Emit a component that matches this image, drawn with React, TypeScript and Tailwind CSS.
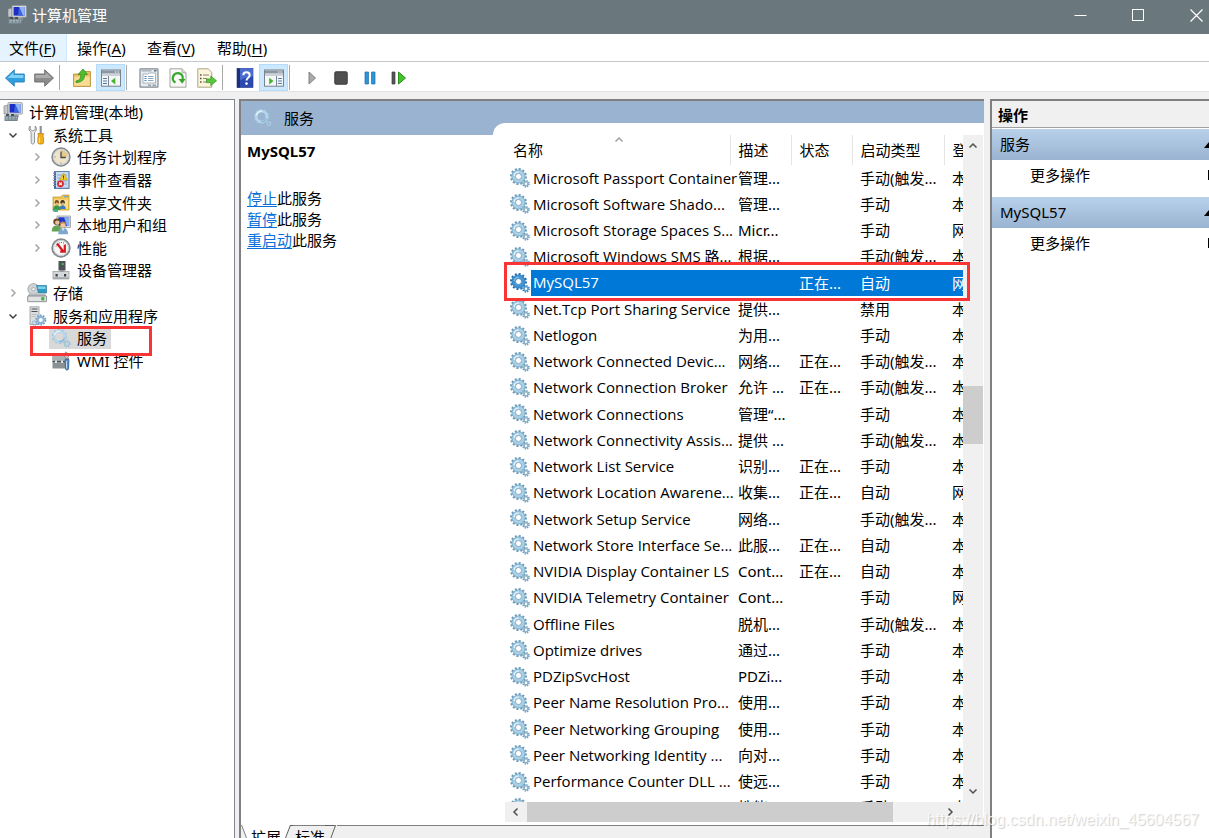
import type { ReactNode } from "react";
import clsx from "clsx";

type IconProps = { className?: string };

/* ---------- Iconos ---------- */

function GearsIcon({ className, active }: IconProps & { active?: boolean }) {
  const edge = active ? "#2672b2" : "#6c9cba";
  const body = active ? "#3f95d6" : "#a9d0e6";
  const small = active ? "#5d9fd0" : "#8bb2ca";
  return (
    <svg viewBox="0 0 20 20" className={clsx("w-5 h-5 shrink-0", className)} fill="none">
      <circle cx="8.5" cy="8.5" r="7.4" stroke={edge} strokeWidth="2.2" strokeDasharray="2 1.87" />
      <circle cx="8.5" cy="8.5" r="5" stroke={body} strokeWidth="3.6" />
      <circle cx="8.5" cy="8.5" r="6.6" stroke={edge} strokeWidth="0.7" />
      <path d="M4.2 8A4.4 4.4 0 0 1 9 4.1" stroke="#e3f3fb" strokeWidth="1.4" opacity={active ? 0.4 : 1} />
      <circle cx="8.5" cy="8.5" r="3.1" fill="#fff" stroke={edge} strokeWidth="0.9" />
      <circle cx="16" cy="15.8" r="3" stroke={edge} strokeWidth="1.8" strokeDasharray="1.2 1.15" />
      <circle cx="16" cy="15.8" r="2" stroke={small} strokeWidth="1.6" />
      <circle cx="16" cy="15.8" r="0.9" fill="#eef6fa" />
    </svg>
  );
}

function PaleGearsIcon({ className }: IconProps) {
  return (
    <svg viewBox="0 0 20 20" className={clsx("w-5 h-5 shrink-0", className)} fill="none">
      <circle cx="8.5" cy="8.5" r="6.9" stroke="#a3c6dc" strokeWidth="1.6" strokeDasharray="2.6 1.74" />
      <circle cx="8.5" cy="8.5" r="5.3" stroke="#b4d6ea" strokeWidth="2.8" />
      <path d="M3.4 7.5A5.2 5.2 0 0 1 9 3.3" stroke="#e2f2fb" strokeWidth="1.5" />
      <path d="M13.4 10A5.2 5.2 0 0 1 8 13.7" stroke="#8ab3d0" strokeWidth="1.2" />
      <circle cx="16" cy="15.8" r="2.8" stroke="#92b5cd" strokeWidth="1.6" strokeDasharray="1.2 1" />
      <circle cx="16" cy="15.8" r="1.8" stroke="#accadd" strokeWidth="1.3" />
    </svg>
  );
}

function ComputerIcon({ className }: IconProps) {
  return (
    <svg viewBox="0 0 20 20" className={clsx("w-5 h-5 shrink-0", className)}>
      <path d="M1 4l4-1v9H1z" fill="#c4c8cb" stroke="#74797e" strokeWidth="0.6" />
      <rect x="5" y="0.6" width="14.4" height="11.6" rx="0.8" fill="#d8dbde" stroke="#8b9095" strokeWidth="0.7" />
      <rect x="6.6" y="2" width="11.2" height="8.6" fill="#1b2fc4" />
      <path d="M12 2h5.8v8.6h-2z" fill="#8eb4f4" />
      <path d="M12 2l3.8 8.6H11z" fill="#3f63e0" />
      <path d="M10 12.2h5l1 2.6H9z" fill="#a6abaf" />
      <path d="M1.5 13.5h14l-1 5.5H1.5z" fill="#74858f" />
      <path d="M3 12h3v2H3zM8 12h3v2H8z" fill="#47535a" />
      <path d="M2.5 15.3h11.6M2.5 17h11.2" stroke="#c9d1d5" strokeWidth="0.8" strokeDasharray="2.4 1" />
    </svg>
  );
}

function ToolsIcon() {
  return (
    <svg viewBox="0 0 20 20" className="w-5 h-5 shrink-0">
      <path
        d="M3.2 1C1.6 2.2 1.5 5 3 6.3l1.1 1V17c0 1.3.6 2 1.7 2s1.7-.7 1.7-2V7.3l1.1-1C10 5 9.8 2.2 8.2 1v3.6L5.8 5.7 3.2 4.5z"
        fill="#e4e6e8"
        stroke="#7c8186"
        strokeWidth="0.8"
      />
      <path d="M12.6 1h2.2v7.5h-2.2z" fill="#8c9196" />
      <path d="M10.8 8.6h5.8l-.8 2.4.8 1.2v5.3c0 1-.8 1.6-2.9 1.6s-2.9-.6-2.9-1.6v-5.3l.8-1.2z" fill="#f2ae1c" stroke="#b8790c" strokeWidth="0.7" />
      <path d="M12.4 12.5v5.2" stroke="#fbe08a" strokeWidth="1.2" />
    </svg>
  );
}

function ClockIcon() {
  return (
    <svg viewBox="0 0 20 20" className="w-5 h-5 shrink-0">
      <circle cx="10" cy="10" r="8.8" fill="#efe4c8" stroke="#84888c" strokeWidth="1.8" />
      <circle cx="10" cy="10" r="7.6" fill="none" stroke="#cfd3d6" strokeWidth="1.2" />
      <path d="M10 10V3a7 7 0 0 1 7 7z" fill="#e8c98a" />
      <path d="M10 4.5V10.5h4.8" fill="none" stroke="#3f4a52" strokeWidth="1.3" />
      <path d="M10 15.5v1.2M3.4 10h1.2" stroke="#7c7c7c" strokeWidth="0.9" />
    </svg>
  );
}

function EventViewerIcon() {
  return (
    <svg viewBox="0 0 20 20" className="w-5 h-5 shrink-0">
      <rect x="3" y="1.2" width="15.5" height="17.6" fill="#3e5f9f" />
      <rect x="5" y="2" width="12.6" height="15.8" fill="#c8dcf2" />
      <path d="M6 5h10M6 8h10M6 11h10M6 14h10" stroke="#7f9cc8" strokeWidth="0.8" />
      <path d="M2 3h3M2 5.5h3M2 8h3M2 10.5h3M2 13h3M2 15.5h3" stroke="#8a9098" strokeWidth="1.1" />
      <path d="M12.5 3l4 7h-8z" fill="#f6d02a" stroke="#b99a12" strokeWidth="0.6" />
      <path d="M12.5 5.5v2.3M12.5 8.5v.8" stroke="#3a3208" strokeWidth="1" />
      <circle cx="9.5" cy="13.8" r="3.4" fill="#d8262c" />
      <path d="M8.2 12.5l2.6 2.6M10.8 12.5l-2.6 2.6" stroke="#fff" strokeWidth="1.1" />
    </svg>
  );
}

function SharedFoldersIcon() {
  return (
    <svg viewBox="0 0 20 20" className="w-5 h-5 shrink-0">
      <path d="M2 4h8l1.5-2H18v15H2z" fill="#f0c452" stroke="#c2932c" strokeWidth="0.7" />
      <path d="M3 6.5h14V16H3z" fill="#fadf8f" />
      <path d="M13 2.8h4v1.4h-4z" fill="#6aa6d8" />
      <circle cx="5.8" cy="9.2" r="2.2" fill="#7b4e22" />
      <path d="M4.6 9.6h2.6v2H4.6z" fill="#e8b98c" />
      <path d="M2 17c0-3 1.5-4.8 3.8-4.8S9.6 14 9.6 17z" fill="#3f9a48" />
      <circle cx="11.6" cy="9.2" r="2.2" fill="#3c3024" />
      <path d="M10.5 9.6h2.4v2h-2.4z" fill="#e8b98c" />
      <path d="M8.6 16c0-2.6 1.2-3.8 3-3.8s3.2 1.2 3.2 3.8z" fill="#3a7dbb" />
      <path d="M1 16.5h6v2.5H3z" fill="#4eb08a" />
    </svg>
  );
}

function UsersIcon() {
  return (
    <svg viewBox="0 0 20 20" className="w-5 h-5 shrink-0">
      <rect x="6" y="1" width="13.5" height="11.5" fill="#d9dcdf" stroke="#8e9398" strokeWidth="0.7" />
      <rect x="7.4" y="2.3" width="10.7" height="8.6" fill="#1e36c8" />
      <path d="M13 2.3h5.1v8.6h-2z" fill="#86aef2" />
      <circle cx="5.6" cy="6.8" r="3.3" fill="#6d4a2a" />
      <circle cx="6.3" cy="7.6" r="2.2" fill="#ebc19a" />
      <path d="M.8 16.5c0-4 1.6-6 4.9-6s4.6 2 4.6 6z" fill="#63a352" />
      <circle cx="12" cy="9.5" r="3.1" fill="#b98848" />
      <circle cx="12" cy="10.4" r="2.2" fill="#f0cba6" />
      <path d="M7.3 19.3c0-4 1.5-6.2 4.7-6.2s5 2.2 5 6.2z" fill="#7da7cf" />
      <path d="M11 13.3l1 3 1-3z" fill="#fff" />
    </svg>
  );
}

function PerformanceIcon() {
  return (
    <svg viewBox="0 0 20 20" className="w-5 h-5 shrink-0">
      <circle cx="10" cy="10" r="8.8" fill="#f7f7f7" stroke="#85898d" strokeWidth="1.8" />
      <circle cx="10" cy="10" r="7.5" fill="none" stroke="#c9ccce" strokeWidth="1" />
      <path d="M5 8.5A5.5 5.5 0 0 1 14.5 6.5" fill="none" stroke="#4a4a4a" strokeWidth="1" strokeDasharray="1 1.2" />
      <path d="M6 5.5l6.5 8.2M9.2 13.6h4.6V6.8" fill="none" stroke="#d8181c" strokeWidth="2.2" />
    </svg>
  );
}

function DeviceManagerIcon() {
  return (
    <svg viewBox="0 0 20 20" className="w-5 h-5 shrink-0">
      <rect x="7.5" y="1" width="7" height="9.5" fill="#4c5257" />
      <rect x="10.8" y="3.2" width="1.8" height="1.8" fill="#43d05a" />
      <path d="M9.2 10.5h3.6v2H9.2z" fill="#7a7f84" />
      <rect x="2" y="11.5" width="16" height="7.5" fill="#d5d8da" stroke="#96999c" strokeWidth="0.7" />
      <path d="M4.5 14h2.2v2.6H4.5zM13 14h2.2v2.6H13z" fill="#3a3f43" />
      <path d="M2.4 18h15.2" stroke="#8d9194" />
    </svg>
  );
}

function StorageIcon() {
  return (
    <svg viewBox="0 0 20 20" className="w-5 h-5 shrink-0">
      <circle cx="6.5" cy="6.2" r="5.6" fill="#cfd3d5" stroke="#8f9497" strokeWidth="0.7" />
      <circle cx="6.5" cy="6.2" r="1.7" fill="#f5f7f8" stroke="#85898c" strokeWidth="0.6" />
      <path d="M9.5 2.5h10V10h-8z" fill="#2e9cc4" stroke="#1d6e96" strokeWidth="0.6" />
      <path d="M10.5 3.5h8V6H11z" fill="#7fd0e8" />
      <path d="M2 10.5h16l1.5 2.5v5.5H.7V13z" fill="#b8bcbe" />
      <rect x="0.7" y="13" width="18.8" height="5.7" rx="0.6" fill="#e0e2e3" stroke="#7c8083" strokeWidth="0.8" />
      <rect x="14.3" y="14.2" width="3" height="3.2" fill="#38b03a" />
    </svg>
  );
}

function ServerGearIcon() {
  return (
    <svg viewBox="0 0 20 20" className="w-5 h-5 shrink-0" fill="none">
      <rect x="3" y="0.8" width="9" height="17.8" fill="#dcdfe1" stroke="#979b9f" strokeWidth="0.8" />
      <path d="M4.5 3h6M4.5 5.5h6" stroke="#4b5054" strokeWidth="1.1" />
      <path d="M4.5 8.5h6M4.5 10.5h4" stroke="#b4b8bb" strokeWidth="0.8" />
      <circle cx="13.8" cy="14" r="4.6" stroke="#6f9dc4" strokeWidth="1.8" strokeDasharray="1.7 1.19" />
      <circle cx="13.8" cy="14" r="3.1" fill="#fff" stroke="#8bb4d8" strokeWidth="2.2" />
      <circle cx="7.5" cy="17" r="2" stroke="#8eb4d4" strokeWidth="1.5" strokeDasharray="1 0.6" />
    </svg>
  );
}

function WmiIcon() {
  return (
    <svg viewBox="0 0 20 20" className="w-5 h-5 shrink-0">
      <path d="M6 5V3h6v2" fill="none" stroke="#6d7275" strokeWidth="1.4" />
      <path d="M1.5 5h13L18 7v10.5H1.5z" fill="#8a9195" />
      <path d="M1.5 5h13v4.5h-13z" fill="#aab1b5" />
      <path d="M1.5 10.5h13" stroke="#4d5356" />
      <path d="M4 9.5h2V12H4zM10 9.5h2V12h-2z" fill="#dfe2e4" />
      <path d="M14.5.8l3 2.2v3l-1.8 1.5-2.2-1.7z" fill="#c9cdd0" stroke="#676c6f" strokeWidth="0.6" />
      <path d="M14 8.5h4l-.5 9.5c-.4 1.5-2.6 1.5-3 0z" fill="#5793d0" stroke="#2c5f98" strokeWidth="0.7" />
      <path d="M15.5 10v7.5" stroke="#b9d8f2" />
    </svg>
  );
}

function ArrowIcon({ forward }: { forward?: boolean }) {
  return forward ? (
    <svg viewBox="0 0 20 18" className="w-5 h-[18px]">
      <path d="M.7 5h10V.8L19.5 9l-8.800 8.200V13H.7z" fill="#8c8c8c" stroke="#6b6b6b" strokeWidth="0.9" />
      <path d="M1.600 6h10V3.200L17.500 9H1.600z" fill="#adadad" />
    </svg>
  ) : (
    <svg viewBox="0 0 20 18" className="w-5 h-[18px]">
      <path d="M19.300 5h-10V.8L.5 9l8.800 8.200V13h10z" fill="#2f9fe0" stroke="#2b7fb8" strokeWidth="0.9" />
      <path d="M18.400 6h-10V3.200L2.500 9h15.900z" fill="#7fd0f6" />
    </svg>
  );
}

function FolderUpIcon() {
  return (
    <svg viewBox="0 0 20 20" className="w-5 h-5">
      <path d="M1.5 6h8L11 3.5h7.500v15h-17z" fill="#e6bd60" stroke="#b98d35" strokeWidth="0.8" />
      <path d="M2.300 8.500h15.400v9.200H2.300z" fill="#f6dc94" />
      <path d="M4 13c3.500-.5 5.200-2.800 4.800-6.500H6L11 1l4.500 5.500h-3C13 11.500 9.500 14.500 4 14.500z" fill="#4cc02c" stroke="#2c8a16" strokeWidth="0.7" />
    </svg>
  );
}

function PaneIcon({ right }: { right?: boolean }) {
  return (
    <svg viewBox="0 0 20 18" className="w-5 h-[18px]">
      <rect x="0.5" y="1" width="19" height="16.2" fill="#f4f6f8" stroke="#79838d" />
      <rect x="1" y="1.5" width="18" height="3" fill="#8b96a1" />
      <path d="M14 3h1.3M16.5 3h1.3" stroke="#fff" strokeWidth="1.2" />
      <path d="M1 6h18" stroke="#c4cad0" strokeWidth="1.6" />
      {right ? (
        <>
          <path d="M12.5 7v10" stroke="#7c8690" />
          <path d="M14 9.5h4M14 12h4M14 14.5h4" stroke="#4f7fb0" strokeWidth="1.2" />
          <path d="M5.2 8.8v6.6l4.3-3.3z" fill="#43b52a" />
        </>
      ) : (
        <>
          <path d="M7.5 7v10" stroke="#7c8690" />
          <path d="M2 9.5h4M2 12h4M2 14.5h4" stroke="#4f7fb0" strokeWidth="1.2" />
          <path d="M14.3 8.8v6.6L10 12.1z" fill="#43b52a" />
        </>
      )}
    </svg>
  );
}

function PropertiesIcon() {
  return (
    <svg viewBox="0 0 20 20" className="w-5 h-5">
      <rect x="1" y="0.8" width="18" height="18.4" rx="0.8" fill="#e6ebef" stroke="#818a92" strokeWidth="1.2" />
      <path d="M2.5 2.8h10" stroke="#a7b2bc" strokeWidth="1.4" />
      <path d="M15 2.8h2.5" stroke="#5d6872" strokeWidth="1.4" />
      <path d="M4 6h5l1-1h6.5v10H4z" fill="#fff" stroke="#98a6b2" strokeWidth="0.8" />
      <path d="M5.5 8.5h2M5.5 10.5h2M5.5 12.5h2" stroke="#3c83c0" strokeWidth="1.1" />
      <path d="M9 8.5h5.5M9 10.5h5.5M9 12.5h5.5" stroke="#8fa9be" />
      <path d="M9 17.2h3M13.5 17.2h3.5" stroke="#96a3ae" strokeWidth="1.6" />
    </svg>
  );
}

function RefreshIcon() {
  return (
    <svg viewBox="0 0 20 20" className="w-5 h-5">
      <path d="M2 .8h12l4 4v14.4H2z" fill="#f8f8f4" stroke="#9a9a94" strokeWidth="0.9" />
      <path d="M14 .8v4h4" fill="#dcdcd6" stroke="#9a9a94" strokeWidth="0.7" />
      <path d="M7.5 14.6A5 5 0 1 1 14.6 11.5" fill="none" stroke="#35a62c" strokeWidth="2.3" />
      <path d="M10.5 11h7l-3.3 4.8z" fill="#35a62c" />
    </svg>
  );
}

function ExportIcon() {
  return (
    <svg viewBox="0 0 20 20" className="w-5 h-5">
      <path d="M.8.8h10.4l3.600 3.600v14.800H.8z" fill="#fbf5dc" stroke="#a59c7c" strokeWidth="0.9" />
      <path d="M3 7h1.5M3 10.5h1.5M3 14h1.5" stroke="#4a4a4a" strokeWidth="1.3" />
      <path d="M6 7h6M6 10.5h4M6 14h4" stroke="#8b8672" strokeWidth="1.2" />
      <path d="M9.5 11h4.3V8l5.7 4.8-5.700 4.800v-3H9.5z" fill="#58c83a" stroke="#2f8f1c" strokeWidth="0.7" />
    </svg>
  );
}

function HelpIcon() {
  return (
    <svg viewBox="0 0 20 20" className="w-5 h-5">
      <rect x="2" y="0.5" width="16" height="19" fill="#2b49ae" stroke="#1f337c" strokeWidth="0.6" />
      <path d="M2 .5h3v19H2z" fill="#1c2f7c" />
      <path d="M5 .5h13v8c-5 0-9 1.5-13 4z" fill="#4a6bd0" />
      <path d="M8.3 7.2c0-4 6.4-4 6.4 0 0 2.600-3.200 2.500-3.200 5.300" fill="none" stroke="#fff" strokeWidth="2" />
      <circle cx="11.5" cy="15.6" r="1.3" fill="#fff" />
    </svg>
  );
}

function PlayIcon() {
  return (
    <svg viewBox="0 0 12 14" className="w-3 h-[14px]">
      <path d="M3 1l6.5 6L3 13z" fill="#a9a9a9" stroke="#828282" />
    </svg>
  );
}

function StopIcon() {
  return (
    <svg viewBox="0 0 14 14" className="w-[14px] h-[14px]">
      <rect x="0.8" y="0.8" width="12.4" height="12.4" rx="1.2" fill="#505050" stroke="#3a3a3a" />
    </svg>
  );
}

function PauseIcon() {
  return (
    <svg viewBox="0 0 12 14" className="w-3 h-[14px]">
      <path d="M1 1h3.5v12H1zM7.5 1H11v12H7.5z" fill="#2b95d8" stroke="#1c6eb0" strokeWidth="0.7" />
    </svg>
  );
}

function ResumeIcon() {
  return (
    <svg viewBox="0 0 16 14" className="w-4 h-[14px]">
      <path d="M1 1h3v12H1z" fill="#555" stroke="#3c3c3c" strokeWidth="0.7" />
      <path d="M7.5 1l7 6-7 6z" fill="#43c22c" stroke="#279016" />
    </svg>
  );
}

function Chevron({ dir, className }: { dir: "up" | "down" | "left" | "right"; className?: string }) {
  const paths = {
    up: "M1.5 6.5L5 3l3.5 3.5",
    down: "M1.5 3.5L5 7l3.5-3.5",
    left: "M6.5 1.5L3 5l3.5 3.5",
    right: "M3.5 1.5L7 5 3.5 8.5",
  };
  return (
    <svg viewBox="0 0 10 10" className={clsx("w-[10px] h-[10px]", className)} fill="none" stroke="currentColor" strokeWidth="1.5">
      <path d={paths[dir]} />
    </svg>
  );
}

/* ---------- Datos ---------- */

const menus = [
  { label: "文件", hotkey: "F" },
  { label: "操作", hotkey: "A" },
  { label: "查看", hotkey: "V" },
  { label: "帮助", hotkey: "H" },
];

const toolGroups: { name: string; icon: ReactNode; on?: boolean }[][] = [
  [
    { name: "后退", icon: <ArrowIcon /> },
    { name: "前进", icon: <ArrowIcon forward /> },
  ],
  [
    { name: "上移一级", icon: <FolderUpIcon /> },
    { name: "显示控制台树", icon: <PaneIcon />, on: true },
  ],
  [
    { name: "属性", icon: <PropertiesIcon /> },
    { name: "刷新", icon: <RefreshIcon /> },
    { name: "导出列表", icon: <ExportIcon /> },
  ],
  [
    { name: "帮助", icon: <HelpIcon /> },
    { name: "显示操作窗格", icon: <PaneIcon right />, on: true },
  ],
  [
    { name: "启动服务", icon: <PlayIcon /> },
    { name: "停止服务", icon: <StopIcon /> },
    { name: "暂停服务", icon: <PauseIcon /> },
    { name: "重启动服务", icon: <ResumeIcon /> },
  ],
];

type TreeNode = {
  label: string;
  level: 0 | 1 | 2;
  icon: ReactNode;
  state?: "open" | "closed";
  selected?: boolean;
};

const tree: TreeNode[] = [
  { label: "计算机管理(本地)", level: 0, icon: <ComputerIcon /> },
  { label: "系统工具", level: 1, icon: <ToolsIcon />, state: "open" },
  { label: "任务计划程序", level: 2, icon: <ClockIcon />, state: "closed" },
  { label: "事件查看器", level: 2, icon: <EventViewerIcon />, state: "closed" },
  { label: "共享文件夹", level: 2, icon: <SharedFoldersIcon />, state: "closed" },
  { label: "本地用户和组", level: 2, icon: <UsersIcon />, state: "closed" },
  { label: "性能", level: 2, icon: <PerformanceIcon />, state: "closed" },
  { label: "设备管理器", level: 2, icon: <DeviceManagerIcon /> },
  { label: "存储", level: 1, icon: <StorageIcon />, state: "closed" },
  { label: "服务和应用程序", level: 1, icon: <ServerGearIcon />, state: "open" },
  { label: "服务", level: 2, icon: <PaleGearsIcon />, selected: true },
  { label: "WMI 控件", level: 2, icon: <WmiIcon /> },
];

// nombre, descripción, estado, tipo de inicio, inicio de sesión
const services: string[][] = [
  ["Microsoft Passport Container", "管理...", "", "手动(触发...", "本"],
  ["Microsoft Software Shado...", "管理...", "", "手动", "本"],
  ["Microsoft Storage Spaces S...", "Micr...", "", "手动", "网"],
  ["Microsoft Windows SMS 路...", "根据...", "", "手动(触发...", "本"],
  ["MySQL57", "", "正在...", "自动", "网"],
  ["Net.Tcp Port Sharing Service", "提供...", "", "禁用", "本"],
  ["Netlogon", "为用...", "", "手动", "本"],
  ["Network Connected Devic...", "网络...", "正在...", "手动(触发...", "本"],
  ["Network Connection Broker", "允许 ...", "正在...", "手动(触发...", "本"],
  ["Network Connections", "管理“...", "", "手动", "本"],
  ["Network Connectivity Assis...", "提供 ...", "", "手动(触发...", "本"],
  ["Network List Service", "识别...", "正在...", "手动", "本"],
  ["Network Location Awarene...", "收集...", "正在...", "自动", "网"],
  ["Network Setup Service", "网络...", "", "手动(触发...", "本"],
  ["Network Store Interface Se...", "此服...", "正在...", "自动", "本"],
  ["NVIDIA Display Container LS", "Cont...", "正在...", "自动", "本"],
  ["NVIDIA Telemetry Container", "Cont...", "", "手动", "网"],
  ["Offline Files", "脱机...", "", "手动(触发...", "本"],
  ["Optimize drives", "通过...", "", "手动", "本"],
  ["PDZipSvcHost", "PDZi...", "", "手动", "本"],
  ["Peer Name Resolution Pro...", "使用...", "", "手动", "本"],
  ["Peer Networking Grouping", "使用...", "", "手动", "本"],
  ["Peer Networking Identity ...", "向对...", "", "手动", "本"],
  ["Performance Counter DLL ...", "使远...", "", "手动", "本"],
  ["Performance Logs & Alerts", "性能...", "", "手动", "本"],
];

/* ---------- Secciones ---------- */

function TitleBar() {
  return (
    <header className="flex items-center h-[34px] shrink-0 bg-[#6a787d] text-white">
      <ComputerIcon className="ml-[7px] mr-[5px] -mt-1" />
      <h1 className="flex-1 text-[15px] leading-5 pb-1">计算机管理</h1>
      <button aria-label="最小化" className="w-[58px] flex justify-center pb-1">
        <svg viewBox="0 0 13 13" className="w-[13px] h-[13px]" stroke="#fff">
          <path d="M.5 6.5h12" />
        </svg>
      </button>
      <button aria-label="最大化" className="w-[58px] flex justify-center pb-1">
        <svg viewBox="0 0 13 13" className="w-[13px] h-[13px]" stroke="#fff" fill="none">
          <rect x="0.5" y="0.5" width="11" height="11" />
        </svg>
      </button>
      <button aria-label="关闭" className="w-[42px] flex justify-end pr-[6px] pb-1">
        <svg viewBox="0 0 13 13" className="w-[13px] h-[13px]" stroke="#fff" strokeWidth="1.2">
          <path d="M.5 .5l12 12M12.5 .5l-12 12" />
        </svg>
      </button>
    </header>
  );
}

function MenuBar() {
  return (
    <nav className="flex h-7 shrink-0 bg-white border-b border-[#c3c9cd]">
      {menus.map((m, i) => (
        <button
          key={m.hotkey}
          className={clsx(
            "text-[15px] leading-5 text-left",
            i === 0 ? "w-[67px] pl-[9px] bg-[#e5f3ff] border-r border-[#cce8ff]" : "w-[70px] pl-[10px]"
          )}
        >
          {m.label}(<span className="underline underline-offset-2">{m.hotkey}</span>)
        </button>
      ))}
    </nav>
  );
}

function Toolbar() {
  return (
    <div role="toolbar" className="flex items-center h-[30px] pt-[2px] shrink-0 bg-white border-b border-[#e3e3e3]">
      {toolGroups.map((group, g) => (
        <div key={g} className="flex items-center h-full">
          {g > 0 && <span className="w-px h-[25px] ml-px mr-[7px] bg-[#a9a9a9]" />}
          {group.map((tool) => (
            <button
              key={tool.name}
              aria-label={tool.name}
              className={clsx(
                "w-[29px] h-[27px] flex items-center justify-center",
                tool.on && "bg-[#cce8ff] border border-[#b5dcfb]"
              )}
            >
              {tool.icon}
            </button>
          ))}
        </div>
      ))}
    </div>
  );
}

function TreePane() {
  return (
    <aside className="w-[235px] shrink-0 bg-white border-t border-r border-[#828790] pt-px">
      <ul className="grid auto-rows-fr h-[271px]">
        {tree.map((node) => (
          <li
            key={node.label}
            className={clsx("flex items-center", node.level === 2 ? "pl-[25px]" : "pl-px")}
          >
            {node.level > 0 && (
              <span className="w-6 flex justify-center">
                {node.state && (
                  <Chevron
                    dir={node.state === "open" ? "down" : "right"}
                    className={node.state === "open" ? "text-[#404040]" : "text-[#a6a6a6]"}
                  />
                )}
              </span>
            )}
            <button
              className={clsx(
                "flex items-center gap-[6px] h-full pl-[2px] pr-1 text-[15px] leading-5",
                node.selected && "bg-[#d9d9d9]"
              )}
            >
              {node.icon}
              {node.label}
            </button>
          </li>
        ))}
      </ul>
    </aside>
  );
}

function ServiceDetail() {
  return (
    <section className="w-[252px] shrink-0 bg-white">
      <div className="flex items-center gap-[11px] h-[34px] pl-3 bg-[#99b3d1]">
        <PaleGearsIcon />
        <h2 className="text-[15px]">服务</h2>
      </div>
      <div className="px-[6px] pt-[6px] text-[15px]">
        <h3 className="font-bold leading-5">MySQL57</h3>
        <ul className="mt-[27px] leading-[21px]">
          {["停止", "暂停", "重启动"].map((action) => (
            <li key={action}>
              <a href="#" className="text-[#0b6fd8] underline underline-offset-2">
                {action}
              </a>
              此服务
            </li>
          ))}
        </ul>
      </div>
    </section>
  );
}

function ServiceTable() {
  return (
    <table className="w-[520px] h-[686px] table-fixed border-collapse text-[15px] leading-5 whitespace-nowrap">
      <colgroup>
        <col className="w-[225px]" />
        <col className="w-[61px]" />
        <col className="w-[61px]" />
        <col className="w-[92px]" />
        <col className="w-[81px]" />
      </colgroup>
      <thead>
        <tr className="h-[30px]">
          {["名称", "描述", "状态", "启动类型", "登"].map((h, i) => (
            <th key={h} className="relative font-normal text-left p-0 pl-2 border-r border-[#e5e5e5]">
              {h}
              {i === 0 && (
                <Chevron dir="up" className="absolute left-[109px] top-0 w-2 h-2 text-[#a0a0a0]" />
              )}
            </th>
          ))}
        </tr>
      </thead>
      <tbody>
        {services.map(([name, ...cells]) => {
          const selected = name === "MySQL57";
          return (
            <tr key={name} className={selected ? "text-white" : ""}>
              <td className="p-0">
                <div className="flex items-center h-[26px] pl-[5px]">
                  <GearsIcon active={selected} />
                  <span
                    className={clsx(
                      "flex-1 ml-px pl-[2px] font-['Open_Sans','Noto_Sans_CJK_SC',sans-serif]",
                      selected ? "bg-[#0078d7] pt-[2px] pb-1" : "pb-px"
                    )}
                  >
                    {name}
                  </span>
                </div>
              </td>
              {cells.map((cell, i) => (
                <td key={i} className={clsx("p-0 pl-2 pb-px", selected && "bg-[#0078d7]")}>
                  {cell}
                </td>
              ))}
            </tr>
          );
        })}
      </tbody>
    </table>
  );
}

function VerticalScroll() {
  return (
    <div className="w-5 shrink-0 flex flex-col items-center bg-[#f0f0f0] text-[#505050]">
      <button aria-label="向上滚动" className="h-[22px]">
        <Chevron dir="up" />
      </button>
      <span className="grow-[229]" />
      <span className="w-full h-[58px] bg-[#cdcdcd]" />
      <span className="grow-[337]" />
      <button aria-label="向下滚动" className="h-[22px]">
        <Chevron dir="down" />
      </button>
    </div>
  );
}

function HorizontalScroll() {
  return (
    <div className="h-5 shrink-0 flex items-center bg-[#f0f0f0] text-[#505050]">
      <button aria-label="向左滚动" className="w-[22px] flex justify-center">
        <Chevron dir="left" />
      </button>
      <span className="h-full grow-[366] bg-[#cdcdcd]" />
      <span className="grow-[46]" />
      <button aria-label="向右滚动" className="w-[22px] mr-[22px] flex justify-center">
        <Chevron dir="right" />
      </button>
    </div>
  );
}

function ViewTabs() {
  return (
    <div className="h-[13px] shrink-0 flex items-start overflow-hidden bg-[#f0f0f0] text-[15px] leading-5">
      <svg viewBox="0 0 10 22" className="w-[10px] h-[22px] shrink-0">
        <path d="M1 0L9 22h1V0z" fill="#fff" />
        <path d="M.5 0L9 22" stroke="#808080" />
      </svg>
      <button className="h-[22px] pt-[2px] bg-white">扩展</button>
      <svg viewBox="0 0 12 22" className="w-3 h-[22px] shrink-0">
        <path d="M0 0h9L1 22H0z" fill="#fff" />
        <path d="M9.5 0L1 22M9 .5h3" stroke="#606060" fill="none" />
      </svg>
      <button className="h-[22px] pl-[2px] pt-px border-t border-[#808080]">标准</button>
      <svg viewBox="0 0 12 22" className="w-3 h-[22px] shrink-0">
        <path d="M0 .5h10.5L2.5 22" stroke="#606060" fill="none" />
      </svg>
      <span className="flex-1 border-t border-[#808080]" />
    </div>
  );
}

function ServicesPane() {
  return (
    <main className="flex-1 min-w-0 flex flex-col ml-1 border-t-2 border-l-2 border-[#808080]">
      <div className="flex-1 min-h-0 flex border-b-2 border-white">
        <ServiceDetail />
        <section className="flex-1 min-w-0 flex bg-[#99b3d1] pt-[22px]">
          <div className="flex-1 min-w-0 flex flex-col bg-white rounded-tl-[12px] pt-3 pl-3 pr-px pb-px">
            <div className="flex-1 min-h-0 flex">
              <div className="flex-1 min-w-0 overflow-hidden">
                <ServiceTable />
              </div>
              <VerticalScroll />
            </div>
            <HorizontalScroll />
          </div>
        </section>
      </div>
      <ViewTabs />
    </main>
  );
}

function ActionsPane() {
  return (
    <aside className="w-[219px] shrink-0 ml-[6px] bg-white border-t-2 border-l-2 border-[#808080] text-[15px]">
      <h2 className="h-[27px] pl-[6px] pt-1 leading-5 font-bold bg-[#f0f0f0] border-b border-[#a0a0a0]">操作</h2>
      {["服务", "MySQL57"].map((title) => (
        <section key={title} className="pt-px pb-[6px]">
          <button className="w-full h-[31px] flex items-center justify-between pl-2 bg-gradient-to-b from-[#b9d1ea] to-[#99b3d1]">
            {title}
            <svg viewBox="0 0 5 6" className="w-[5px] h-[6px]">
              <path d="M5 0v6H0z" fill="#000" />
            </svg>
          </button>
          <button className="w-full h-[30px] flex items-center justify-between pl-[38px]">
            更多操作
            <span className="w-px h-[10px] bg-black" />
          </button>
        </section>
      ))}
    </aside>
  );
}

export default function App() {
  return (
    <div className="relative h-screen flex flex-col overflow-hidden bg-[#f0f0f0] text-black font-['Noto_Sans','Noto_Sans_CJK_SC',sans-serif]">
      <TitleBar />
      <MenuBar />
      <Toolbar />
      <div className="flex-1 min-h-0 flex pt-[7px]">
        <TreePane />
        <ServicesPane />
        <ActionsPane />
      </div>

      {/* Marcas rojas sobre el servicio y el nodo seleccionados */}
      <div className="absolute left-[30px] top-[326px] w-[122px] h-[30px] border-3 border-[#fa3434] pointer-events-none" />
      <div className="absolute left-[504px] right-[239px] top-[262px] h-[39px] border-3 border-[#fa3434] pointer-events-none" />

      <p className="absolute right-[10px] bottom-[8px] text-base leading-5 text-white/80 [text-shadow:1px_1px_1px_#00000033] font-['Liberation_Sans',sans-serif] pointer-events-none">
        https://blog.csdn.net/weixin_45604567
      </p>
    </div>
  );
}
